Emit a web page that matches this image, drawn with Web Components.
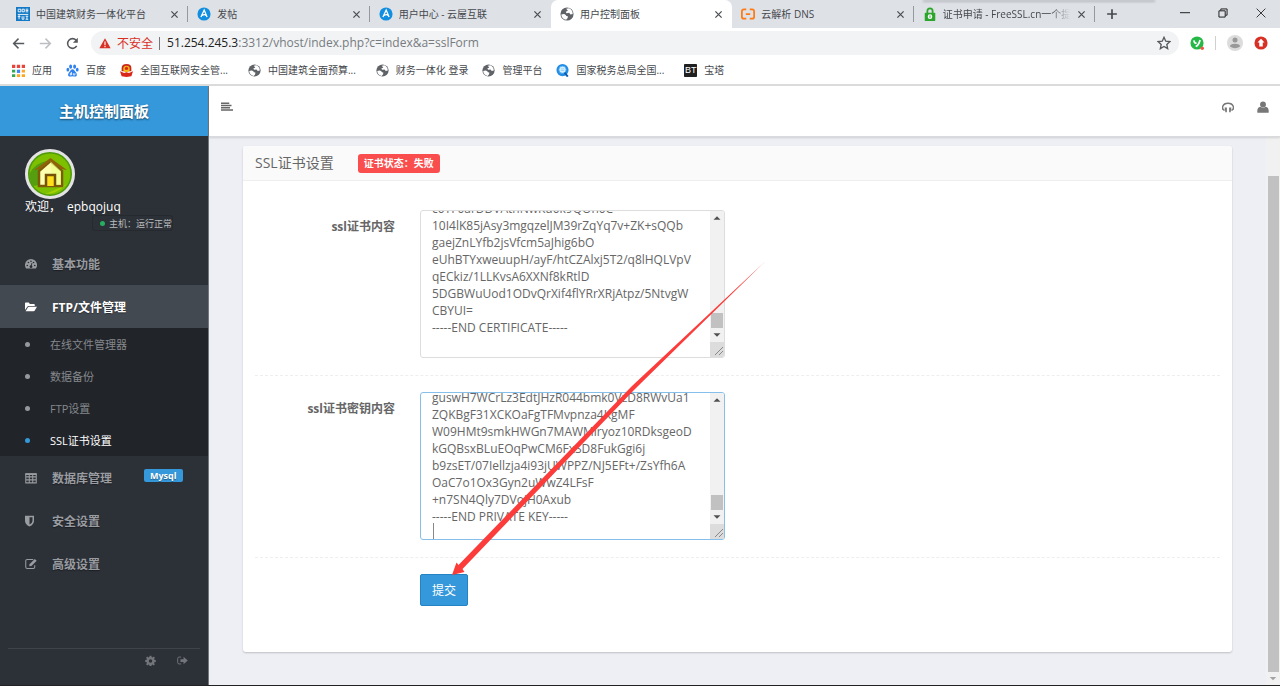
<!DOCTYPE html>
<html lang="zh-CN">
<head>
<meta charset="utf-8">
<title>用户控制面板</title>
<style>
html,body{margin:0;height:100%}
body{font-family:"Open Sans","Noto Sans CJK SC",sans-serif;font-size:12px;color:#666;background:#edeff4}
</style>
</head>
<body>
<hosting-page></hosting-page>
<script>
const define=(name,html,init)=>{
  const t=document.createElement('template');
  t.innerHTML='<style>*{box-sizing:border-box}a{color:inherit;text-decoration:none}button{font:inherit;border:0;background:none;padding:0;color:inherit}</style>'+html;
  customElements.define(name,class extends HTMLElement{
    constructor(){super();this.attachShadow({mode:'open'}).append(t.content.cloneNode(true));}
    connectedCallback(){if(init)init(this,this.shadowRoot);}
  });
};

const globe='<circle cx="8" cy="8" r="7.500" fill="#5f6368"/><path d="M1.500 8.500Q5 7 6.500 9q.5 1.500 2.500 1.500Q9.500 13 7 14.700 1.800 13.500 1.500 8.500zM7 2l3.500-.500Q14.500 3.500 14.500 8l-2.500.7-1.500-2-3 .5L6.500 5.500 9 4.200z" fill="#fff"/>';
const icons={
  csc:'<path fill="#1479c4" d="M0 0h16v16H0z"/><path d="M2.500 2.500h3v3h-3zM7 2.500h2.500v3H7zM11 2.500h3M11 4h3M11 5.500h3M2 8.500h12M3.500 9v5M2 11h3M7 10.500v3.500h2v-3.500M11 10.500h3M12.500 10.500V14M11 14h3" fill="none" stroke="#fff" stroke-width="1"/>',
  hosting:'<circle cx="8" cy="8" r="7.500" fill="#118ee0"/><path d="M4.500 11.500L8.200 3.500l3.300 8M5.500 9.800q3.500-2.300 5 0" fill="none" stroke="#fff" stroke-width="1.500"/>',
  globe,
  aliyun:'<path d="M6 2.700H3.400Q1 2.700 1 5v6q0 2.300 2.400 2.300H6M10 2.700h2.600Q15 2.700 15 5v6q0 2.300-2.400 2.300H10M5.500 8h5" fill="none" stroke="#ff7a12" stroke-width="2"/>',
  lock:'<path d="M5 7V4.500a3 3 0 016 0V7" fill="none" stroke="#2ba52b" stroke-width="2"/><rect x="2" y="6.500" width="12" height="9.500" rx="1" fill="#2ba52b"/><circle cx="8" cy="11" r="2.600" fill="#fff"/><path d="M8 9.500v3" stroke="#2ba52b"/>',
  close:'<path d="M3.500 3.500l9 9M12.500 3.500l-9 9" stroke="#4a4d51" stroke-width="1.800"/>',
  plus:'<path d="M8 1.500v13M1.500 8h13" stroke="#45484c" stroke-width="2.200"/>',
  min:'<path d="M0 7.500h16" stroke="#222" stroke-width="1.600"/>',
  restore:'<path d="M1.500 4.500h10v10h-10zM4.500 4V1.500h10v10H12" fill="none" stroke="#222" stroke-width="1.600"/>',
  quit:'<path d="M1 1l14 14M15 1L1 15" stroke="#222" stroke-width="1.400"/>',
  back:'<path d="M15 8H2M8 2L2 8l6 6" fill="none" stroke="#55585c" stroke-width="1.800"/>',
  forward:'<path d="M1 8h13M8 2l6 6-6 6" fill="none" stroke="#bcbec1" stroke-width="1.800"/>',
  reload:'<path d="M13.200 11A6 6 0 1112.500 4" fill="none" stroke="#55585c" stroke-width="1.900"/><path d="M14.500 1v6h-6z" fill="#55585c"/>',
  warning:'<path d="M8 1.500L15.500 15H.5z" fill="#d93025"/><path d="M8 6v4.500M8 11.500v2" stroke="#fff" stroke-width="1.500"/>',
  star:'<path d="M8 1.500l2 4.400 4.700.5-3.500 3.200 1 4.800L8 12l-4.200 2.400 1-4.800L1.300 6.400 6 5.900z" fill="none" stroke="#55585c" stroke-width="1.500"/>',
  ext:'<circle cx="8" cy="8" r="7.500" fill="#25b846"/><path d="M4.500 5q.3 3.500 3 3.200M11.500 4.500Q10 10.500 6.500 12" fill="none" stroke="#fff" stroke-width="2"/><circle cx="14" cy="14" r="2" fill="#f25545"/>',
  avatar:'<circle cx="8" cy="8" r="8" fill="#dcdcdc"/><circle cx="8" cy="5" r="2.500" fill="#999"/><path d="M3 11.500q0-2.700 5-2.700t5 2.700Q10.500 13.200 8 13.200T3 11.500z" fill="#999"/>',
  update:'<circle cx="8" cy="8" r="7.500" fill="#d93025"/><path d="M8 3l4 4.500h-2V12H6V7.500H4z" fill="#fff"/>',
  apps:'<g fill="#e8453c"><path d="M0 1h4v4H0zM6 1h4v4H6zM12 1h4v4h-4z"/></g><g fill="#4285f4"><path d="M6 7h4v4H6z"/></g><g fill="#34a853"><path d="M0 7h4v3.500H0zM0 12.500h4V16H0z"/></g><g fill="#f9a825"><path d="M12 7h4v3.500h-4zM6 12.500h4V16H6zM12 12.500h4V16h-4z"/></g>',
  baidu:'<g fill="#2f80ef"><ellipse cx="5.700" cy="3.300" rx="1.800" ry="2.600"/><ellipse cx="10.600" cy="3.300" rx="1.800" ry="2.600"/><ellipse cx="2.300" cy="7" rx="1.700" ry="2.300"/><ellipse cx="13.800" cy="7" rx="1.700" ry="2.300"/><path d="M8 6.500c2 0 2.500 2 4 3.500s2.500 5-.8 5.500c-1.300 0-2-.4-3.200-.4s-2 .4-3.200.4C1.500 15 2.500 11.500 4 10S6 6.500 8 6.500z"/></g><path d="M6.700 9.800v3.700H5.300v-2h1.400M9 11.300v2.200h2v-2.200" fill="none" stroke="#fff"/>',
  police:'<path d="M2 5q0-5 6-5t6 5v4H2z" fill="#c9281c"/><circle cx="8" cy="6" r="4" fill="#f5b915"/><circle cx="8" cy="5.500" r="2" fill="#db291d"/><path d="M0 9l5 2 3-1 3 1 5-2-2 6-6 1-6-1z" fill="#d9271a"/>',
  tax:'<circle cx="8" cy="7.500" r="7.500" fill="#238de4"/><circle cx="8" cy="7" r="4.500" fill="#d5efff" stroke="#3da2f0"/><path d="M10.500 10.500l4 5" stroke="#0d5cae" stroke-width="2.500"/><path d="M6 6h4M6 8h4" stroke="#8fcdf5"/>',
  bt:'<rect width="16" height="16" rx="1" fill="#202020"/>',
  lines:'<path d="M0 3h11M0 6h14M0 9h12M0 12h16" stroke="#666" stroke-width="2"/>',
  headset:'<path d="M3.500 12.500C-1.500 10.500.5 3 8 3s9.500 7.500 4.500 9.500" fill="none" stroke="#777" stroke-width="2"/><path d="M3.500 8.500H6.500V15H4.500zM12.500 8.500H9.500V15h2z" fill="#777"/>',
  user:'<circle cx="8" cy="4.500" r="3.900" fill="#777"/><path d="M.5 15.500q-.8-7.500 4-8Q8 10 11.500 7.500q4.800.5 4 8z" fill="#777"/>',
  gauge:'<path d="M1.500 14A8 8 0 1114.500 14z" fill="#999ca0"/><g fill="#2c3037"><circle cx="3" cy="10" r="1.100"/><circle cx="4.600" cy="6" r="1.100"/><circle cx="8" cy="4.300" r="1.100"/><circle cx="11.400" cy="6" r="1.100"/><circle cx="13" cy="10" r="1.100"/><circle cx="8" cy="11.500" r="1.900"/></g><path d="M8 11.500l1.300-5" stroke="#2c3037" stroke-width="1.200"/>',
  folder:'<path d="M0 12V3q0-1 1-1h4l1.500 2h5.500q1 0 1 1v1.500H5Q3.500 6.500 3 7.500z" fill="#fff"/><path d="M.8 13.500L4 8.300q.5-.8 1.500-.8H16l-3 5.200q-.5.800-1.500.8z" fill="#fff"/>',
  table:'<path d="M1 3h14v11.500H1zM1 6.500h14M1 10.500h14M5.700 3v11.500M10.300 3v11.500" fill="none" stroke="#999ca0" stroke-width="1.400"/><path d="M.4 1.500h15.200V4H.4z" fill="#999ca0"/>',
  shield:'<path d="M0 1h12v6.500q0 5-6 7.800Q0 12.500 0 7.500z" fill="#999ca0"/><path d="M6 3h4v4.500q0 3-4 5z" fill="#2c3037"/>',
  edit:'<path d="M11 2H3Q1 2 1 4v8q0 2 2 2h8q2 0 2-2V9.500" fill="none" stroke="#999ca0" stroke-width="1.400"/><path d="M6 8.300L13 1.200l2.600 2.600-7 7L5.700 11z" fill="#999ca0"/>',
  cog:'<path fill-rule="evenodd" d="M6.700 1h2.600l.4 2 1.200.5 1.700-1.200 1.800 1.800-1.200 1.700.5 1.200 2 .4v2.600l-2 .4-.5 1.200 1.200 1.700-1.800 1.800-1.700-1.200-1.200.5-.4 2H6.700l-.4-2-1.200-.5-1.700 1.200-1.800-1.800 1.200-1.700-.5-1.200-2-.4V7.400l2-.4.5-1.200-1.200-1.700 1.800-1.800 1.700 1.200L6.300 3zM8 6.200a2.500 2.500 0 100 5 2.500 2.500 0 000-5z" fill="#72757a"/>',
  exit:'<path d="M6 3H3Q1 3 1 5v6q0 2 2 2h3" fill="none" stroke="#72757a" stroke-width="1.400"/><path d="M5 6h4.500V2.500L15.700 8 9.500 13.500V10H5z" fill="#72757a"/>',
  home:'<circle cx="25" cy="25" r="23.500" fill="#4f9a0b" stroke="#e3e3e3" stroke-width="3"/><circle cx="25" cy="25" r="20.500" fill="#7cc000"/><path d="M5 24Q10 14 22 12L14 22v14L8 37Q4 31 5 24z" fill="#549e10"/><path d="M20 45q12 0 22-10-9 5-22 10z" fill="#a3d200"/><path d="M14 22v15h23V22L25.500 12z" fill="#ffffb0" stroke="#7e5b08" stroke-width="2.500"/><path d="M25.500 12L36 22v14H26z" fill="#eaff7f" opacity=".6"/><path d="M9 21L25.500 9 42 21l-6-1-10.500-8L15 20z" fill="#906407"/><path d="M21 37V26h9v11" fill="#ffdf1a" stroke="#755107" stroke-width="2.500"/>',
  up:'<path d="M4 10l4-4 4 4z" fill="#505050"/>',
  down:'<path d="M4 6l4 4 4-4z" fill="#505050"/>',
  downdim:'<path d="M4 6l4 4 4-4z" fill="#a3a3a3"/>'
};
define('ui-icon','<style>:host{display:block;flex:none;width:14px;height:14px}svg{display:block;width:100%;height:100%}</style><span></span>',(h,r)=>{
  const n=h.getAttribute('name');
  r.querySelector('span').innerHTML=`<svg aria-hidden="true" viewBox="0 0 ${n==='home'?'50 50':'16 16'}">${icons[n]}</svg>`;
});
/* puts the icon named by the host's "icon" attribute into its icon span */
const addIcon=(h,r)=>{
  const i=document.createElement('ui-icon');
  i.setAttribute('name',h.getAttribute('icon'));
  r.querySelector('.icon').replaceChildren(i);
};

/* ---------- browser window ---------- */
define('browser-tab',`<style>
:host{display:flex;flex:1 1 0;box-sizing:border-box;min-width:0;height:28px;align-items:center;padding:0 8px 0 9px;font-size:10px;color:#45484c;position:relative}
:host([active]){background:#fff;border-radius:7px 7px 0 0}
:host([line])::after{content:"";position:absolute;right:0;top:6px;height:16px;width:1px;background:#95989d}
a{flex:1;min-width:0;overflow:hidden;white-space:nowrap;margin:0 6px;line-height:16px}
:host([last]) a{mask-image:linear-gradient(90deg,#000 85%,transparent)}
button ui-icon{width:11px;height:11px}
</style><span class="icon"></span><a href="#"><slot></slot></a><button aria-label="关闭标签页"><ui-icon name="close"></ui-icon></button>`,addIcon);
define('tab-strip',`<style>
:host{display:flex;background:#dee1e6;height:28px;padding-left:7px;position:relative}
:host::after{content:"";position:absolute;top:0;right:125px;width:232px;height:2px;background:#b5b8bd;filter:blur(1px)}
.tabs{display:flex;flex:1 1 0;min-width:0}
.new{flex:none;width:85px;padding-left:11px}
.new ui-icon{width:12px;height:12px}
.win{display:flex;gap:28px;align-items:center;padding:0 14px 3px 0}
.win ui-icon{width:10px;height:10px}
button{display:block}
</style><nav class="tabs"><browser-tab icon="csc" line>中国建筑财务一体化平台</browser-tab><browser-tab icon="hosting" line>发帖</browser-tab><browser-tab icon="hosting">用户中心 - 云屋互联</browser-tab><browser-tab icon="globe" active>用户控制面板</browser-tab><browser-tab icon="aliyun" line>云解析 DNS</browser-tab><browser-tab icon="lock" line last>证书申请 - FreeSSL.cn一个提供</browser-tab></nav>
<button class="new" aria-label="新标签页"><ui-icon name="plus"></ui-icon></button>
<div class="win"><button aria-label="最小化"><ui-icon name="min"></ui-icon></button><button aria-label="还原"><ui-icon name="restore"></ui-icon></button><button aria-label="关闭"><ui-icon name="quit"></ui-icon></button></div>`);
define('address-bar',`<style>
:host{display:flex;align-items:center;height:30px;background:#fff;padding:0 12px}
.go{display:flex;gap:14px;margin-right:12px}
.go ui-icon{width:13px;height:13px}
.box{display:flex;flex:1;align-items:center;height:24px;border-radius:12px;background:#f1f3f4;padding:0 8px}
.bad{color:#d93025;margin-left:6px}
.sep{width:1px;height:13px;background:#777;margin:0 7px 0 6px}
.url{flex:1;color:#777b80;font-size:12px;line-height:18px;white-space:nowrap;outline:0}
.url b{font-weight:400;color:#222}
.box ui-icon[name=warning]{width:12px;height:12px}
.tools{display:flex;align-items:center;gap:11px;margin-left:11px}
.tools i{width:1px;height:14px;background:#d0d0d0}
.tools ui-icon[name=avatar]{width:16px;height:16px}
</style><div class="go"><button aria-label="后退"><ui-icon name="back"></ui-icon></button><button aria-label="前进"><ui-icon name="forward"></ui-icon></button><button aria-label="刷新"><ui-icon name="reload"></ui-icon></button></div>
<div class="box"><ui-icon name="warning"></ui-icon><span class="bad">不安全</span><span class="sep"></span><div class="url" role="textbox" contenteditable="true" spellcheck="false" aria-label="网址"><b>51.254.245.3</b>:3312/vhost/index.php?c=index&amp;a=sslForm</div><button aria-label="收藏"><ui-icon name="star"></ui-icon></button></div>
<div class="tools"><button aria-label="扩展"><ui-icon name="ext"></ui-icon></button><i></i><button aria-label="用户"><ui-icon name="avatar"></ui-icon></button><button aria-label="更新"><ui-icon name="update"></ui-icon></button></div>`);
define('bookmarks-bar',`<style>
:host{display:flex;align-items:center;box-sizing:border-box;height:28px;background:#fff;border-bottom:2px solid #dcdcdc;padding:0 12px 2px;font-size:10px;color:#45484c;gap:14px}
a{display:flex;align-items:center;gap:7px;line-height:16px;white-space:nowrap}
a.wide{margin-right:6px}
ui-icon{width:13px;height:13px}
.bt{position:relative}
.bt b{position:absolute;inset:0;font:9px/13px "Liberation Sans",sans-serif;color:#fff;text-align:center}
</style><a href="#"><ui-icon name="apps"></ui-icon>应用</a><a href="#"><ui-icon name="baidu"></ui-icon>百度</a><a class="wide" href="#"><ui-icon name="police"></ui-icon>全国互联网安全管...</a><a class="wide" href="#"><ui-icon name="globe"></ui-icon>中国建筑全面预算...</a><a href="#"><ui-icon name="globe"></ui-icon>财务一体化 登录</a><a href="#"><ui-icon name="globe"></ui-icon>管理平台</a><a class="wide" href="#"><ui-icon name="tax"></ui-icon>国家税务总局全国...</a><a href="#"><span class="bt"><ui-icon name="bt"></ui-icon><b>BT</b></span>宝塔</a>`);

/* ---------- side bar ---------- */
define('nav-item',`<style>
:host{display:block;color:#999ca0;font-weight:700;font-size:12px}
a{display:flex;align-items:center;height:43px;padding-left:25px;text-shadow:0 1px 1px #0006}
:host([active]){color:#fff}
:host([active]) a{background:#434951}
.icon{width:27px}
.icon ui-icon{width:12px;height:12px}
</style><a href="#"><span class="icon"></span><slot></slot><slot name="badge"></slot></a>`,addIcon);
define('sub-item',`<style>
:host{display:block;color:#85888c;font-size:11px}
a{display:flex;align-items:center;height:32px;padding-left:25px;gap:20px}
a::before{content:"";width:5px;height:5px;border-radius:50%;background:#96999c}
:host([active]){color:#fff}
:host([active]) a::before{background:#3498db}
</style><a href="#"><slot></slot></a>`);
define('side-bar',`<style>
:host{display:flex;flex-direction:column;flex:none;box-sizing:border-box;width:209px;background:#2c3037;border-right:1px solid #74777c}
.brand{height:50px;background:#3498db;color:#fff;font-weight:700;font-size:15px;line-height:50px;text-align:center;text-shadow:0 1px 2px #0008;margin:0}
.profile{padding:13px 25px 0;height:106px;color:#fff}
.profile ui-icon{width:50px;height:50px}
.hi{display:flex;gap:6px;line-height:16px;white-space:nowrap}
.state{display:flex;align-items:center;gap:4px;margin-left:67px;width:81px;height:16px;border:1px solid #26292e;border-radius:3px;padding-left:7px;font-size:9px;color:#b9bbbd;white-space:nowrap}
.state::before{content:"";width:5px;height:5px;border-radius:50%;background:#27ae60;flex:none}
.sub{background:#212429;height:128px}
.badge{background:#3498db;color:#fff;font-size:9px;line-height:13px;border-radius:2px;padding:0 6px;margin:0 0 4px 32px}
footer{margin:auto 8px 0;border-top:1px solid #3f4248;height:37px;display:flex;align-items:flex-start;justify-content:flex-end;gap:21px;padding:6px 12px 0}
footer ui-icon{width:11px;height:11px}
</style><h1 class="brand">主机控制面板</h1>
<div class="profile"><ui-icon name="home"></ui-icon><div class="hi"><span>欢迎，</span><span>epbqojuq</span></div><div class="state">主机：运行正常</div></div>
<nav><nav-item icon="gauge">基本功能</nav-item><nav-item icon="folder" active>FTP/文件管理</nav-item>
<div class="sub"><sub-item>在线文件管理器</sub-item><sub-item>数据备份</sub-item><sub-item>FTP设置</sub-item><sub-item active>SSL证书设置</sub-item></div>
<nav-item icon="table">数据库管理<span slot="badge" class="badge">Mysql</span></nav-item><nav-item icon="shield">安全设置</nav-item><nav-item icon="edit">高级设置</nav-item></nav>
<footer><button aria-label="设置"><ui-icon name="cog"></ui-icon></button><button aria-label="退出"><ui-icon name="exit"></ui-icon></button></footer>`);

/* ---------- main area ---------- */
define('top-bar',`<style>
:host{display:flex;box-sizing:border-box;justify-content:space-between;height:51px;background:#fff;border-bottom:1px solid #d8dadd;box-shadow:0 1px 2px #0002;padding:15px 11px 0 12px;position:relative}
div{display:flex;gap:23px}button{display:block;height:12px}
ui-icon{width:12px;height:12px}
</style><button aria-label="菜单"><ui-icon name="lines"></ui-icon></button><div><button aria-label="客服"><ui-icon name="headset"></ui-icon></button><button aria-label="账户"><ui-icon name="user"></ui-icon></button></div>`);
define('code-field',`<style>
:host{display:grid;grid-template-columns:140px 305px;column-gap:25px}
label{text-align:right;font-weight:700;line-height:18px;padding-top:8px}
.field{display:flex;position:relative;height:148px;border:1px solid #ddd;border-radius:3px;overflow:hidden;background:#fff}
:host([focused]) .field{border-color:#85bfea}
textarea{flex:1;min-width:0;border:0;outline:0;resize:none;margin:0;padding:6px 0 6px 11px;font:12px/17px "Open Sans","Noto Sans CJK SC",sans-serif;font-variant-ligatures:none;color:#666;background:none;overflow:hidden;white-space:pre}
.bar{flex:none;width:14px;background:#f1f1f1;display:flex;flex-direction:column}
.thumb{margin:auto 1px 0;height:15px;background:#c1c1c1}
.grip{display:block;width:14px;height:15px;background:#dcdcdc;flex:none}
.caret{position:absolute;left:12px;bottom:0;width:1px;height:16px;background:#888;display:none}
:host([focused]) .caret{display:block}
</style><label for="t"></label><div class="field"><textarea id="t" spellcheck="false"></textarea><div class="bar"><ui-icon name="up"></ui-icon><div class="thumb"></div><ui-icon name="down"></ui-icon><svg class="grip" viewBox="0 0 14 15"><path d="M5 13l8-8M9 13l4-4" stroke="#888"/></svg></div><span class="caret"></span></div>`,(h,r)=>{
  r.querySelector('label').textContent=h.getAttribute('label');
  const t=r.querySelector('textarea');
  t.value=h.textContent;
  t.scrollTop=+h.getAttribute('scroll');
});
define('state-label','<style>:host{display:block;background:#fa4d4d;color:#fff;font-weight:700;font-size:10px;line-height:19px;border-radius:3px;padding:0 6px}</style><slot></slot>');
define('hand-arrow','<style>:host{display:block;position:absolute;left:209px;top:116px;width:313px;height:314px;pointer-events:none}svg{display:block}</style><svg width="313" height="314" viewBox="0 0 313 314" aria-hidden="true"><path d="M0 313L4.500 300.500 6.500 303 180 124 312.500 0 182 128 10.500 307 12.500 310z" fill="#fc3c3a"/></svg>');
define('ssl-card',`<style>
:host{display:block;position:relative;background:#fff;border-radius:3px;box-shadow:0 1px 2px #0003}
header{display:flex;align-items:center;gap:24px;height:35px;background:#fafafa;border-bottom:1px solid #eee;border-radius:3px 3px 0 0;padding:0 12px}
h2{margin:0;font-weight:400;font-size:14px;line-height:20px}
form{padding:29px 12px 46px;margin:0}
hr{border:0;border-top:1px dashed #eee;margin:17px 0 16px}
.send{display:block;margin-left:165px;width:48px;height:32px;background:#3498db;border:1px solid #2383c4;border-radius:2px;color:#fff;font-size:12px}
</style><header><h2>SSL证书设置</h2><state-label>证书状态：失败</state-label></header>
<form><code-field label="ssl证书内容" scroll="17">c0TF0arDDVAthNwKu0k9QOn0C
10I4lK85jAsy3mgqzelJM39rZqYq7v+ZK+sQQb
gaejZnLYfb2jsVfcm5aJhig6bO
eUhBTYxweuupH/ayF/htCZAlxj5T2/q8lHQLVpV
qECkiz/1LLKvsA6XXNf8kRtlD
5DGBWuUod1ODvQrXif4flYRrXRjAtpz/5NtvgW
CBYUI=
-----END CERTIFICATE-----

</code-field><hr><code-field focused label="ssl证书密钥内容" scroll="10">guswH7WCrLz3EdtJHzR044bmk0VzD8RWvUa1
ZQKBgF31XCKOaFgTFMvpnza4KgMF
W09HMt9smkHWGn7MAWMlryoz10RDksgeoD
kGQBsxBLuEOqPwCM6FxSD8FukGgi6j
b9zsET/07Iellzja4i93jUWPPZ/NJ5EFt+/ZsYfh6A
OaC7o1Ox3Gyn2uWwZ4LFsF
+n7SN4Qly7DVojH0Axub
-----END PRIVATE KEY-----
</code-field><hr><button class="send" type="button">提交</button></form><hand-arrow></hand-arrow>`);
define('page-scrollbar',`<style>
:host{display:flex;flex-direction:column;flex:none;width:14px;background:#f1f1f1}
div{flex:1;margin:39px 1px 0 2px;background:#c1c1c1}
ui-icon{height:13px}
</style><div></div><ui-icon name="downdim"></ui-icon>`);
define('hosting-page',`<style>
:host{display:flex;flex-direction:column;min-height:100vh;border-bottom:1px solid #222;box-sizing:border-box}
.app{display:flex;flex:1}
.col{flex:1;min-width:0;display:flex;flex-direction:column}
.view{flex:1;display:flex;background:#edeff4}
main{flex:1;min-width:0;padding:9px 34px 31px}
</style><tab-strip></tab-strip><address-bar></address-bar><bookmarks-bar></bookmarks-bar>
<div class="app"><side-bar></side-bar><div class="col"><top-bar></top-bar><div class="view"><main><ssl-card></ssl-card></main><page-scrollbar></page-scrollbar></div></div></div>`);
</script>
</body>
</html>
